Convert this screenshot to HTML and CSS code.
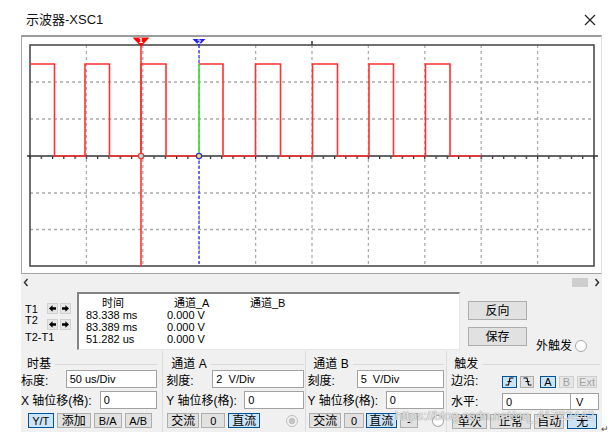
FILE: index.html
```html
<!DOCTYPE html>
<html lang="zh">
<head>
<meta charset="utf-8">
<title>示波器-XSC1</title>
<link rel="stylesheet" href="styles.css">
</head>
<body>
<div class="window">
  <div class="titlebar">
    <span class="title">示波器-XSC1</span>
    <svg class="close" width="12" height="12" viewBox="0 0 12 12"><path d="M1 1L11 11M11 1L1 11" stroke="#222" stroke-width="1.2" fill="none"/></svg>
  </div>
  <div class="panel">
    <div class="scope">
      <svg class="plot" width="579" height="236" viewBox="22 37 579 236">
        <defs>
          <pattern id="tk" x="29.4" y="0" width="11.28" height="10" patternUnits="userSpaceOnUse">
            <rect x="0" y="0" width="1.2" height="10" fill="#222"/>
          </pattern>
        </defs>
        <g class="grid">
          <path d="M86.4 45V266M142.8 45V266M199.2 45V266M255.6 45V266M312 45V266M368.4 45V266M424.8 45V266M481.2 45V266M537.6 45V266"/>
          <path d="M30 82H594M30 119H594M30 193H594M30 229.5H594"/>
        </g>
        <rect class="frame" x="30" y="45" width="564" height="221"/>
        <path class="axis" d="M27 156H598M312 41V45"/>
        <path class="wave" d="M30 64H54.5V156H85V64H109.5V156H141V64H166V156H199M199 64H223V156H255.5V64H280.5V156H312.5V64H337.5V156H369V64H393.5V156H425.5V64H450V156H481"/>
        <path class="cur2" d="M199 45V64M199 156V266"/>
        <path class="edge" d="M199 64V156"/>
        <path class="cur1" d="M141 45V266"/>
        <rect x="29.4" y="156.5" width="565" height="2.5" fill="url(#tk)"/>
        <circle cx="141" cy="156" r="2.6" fill="#9ee" stroke="#ff3030" stroke-width="1.2"/>
        <circle cx="199" cy="156" r="2.6" fill="#ee3" stroke="#2a2aff" stroke-width="1.2"/>
        <polygon points="132.5,37.5 149.5,37.5 141,46.5" fill="#f00"/>
        <text x="141" y="43.3" class="mk">1</text>
        <polygon points="192.5,39 205.5,39 199,45.5" fill="#2020ff"/>
        <text x="199" y="43.6" class="mk mk2">2</text>
      </svg>
    </div>

    <div class="hscroll">
      <svg class="chev" width="6" height="9" viewBox="0 0 6 9"><path d="M4.5 1L1.5 4.5L4.5 8" stroke="#333" stroke-width="1.5" fill="none"/></svg>
      <span class="thumb"></span>
      <svg class="chev" width="6" height="9" viewBox="0 0 6 9"><path d="M1.5 1L4.5 4.5L1.5 8" stroke="#333" stroke-width="1.5" fill="none"/></svg>
    </div>

    <div class="measure">
      <div class="tbox">
        <div class="trow trow1">
          <span class="tl">T1</span>
          <svg class="arr" width="11" height="11" viewBox="0 0 11 11"><path d="M1.2 5.5L5.6 1.4V4H9.8V7H5.6V9.6Z" fill="#000"/></svg>
          <svg class="arr" width="11" height="11" viewBox="0 0 11 11"><path d="M9.8 5.5L5.4 1.4V4H1.2V7H5.4V9.6Z" fill="#000"/></svg>
        </div>
        <div class="trow trow2">
          <span class="tl">T2</span>
          <svg class="arr" width="11" height="11" viewBox="0 0 11 11"><path d="M1.2 5.5L5.6 1.4V4H9.8V7H5.6V9.6Z" fill="#000"/></svg>
          <svg class="arr" width="11" height="11" viewBox="0 0 11 11"><path d="M9.8 5.5L5.4 1.4V4H1.2V7H5.4V9.6Z" fill="#000"/></svg>
        </div>
        <div class="trow3">T2-T1</div>
      </div>

      <div class="readout">
        <span class="h1">时间</span><span class="h2">通道_A</span><span class="h3">通道_B</span>
        <span>83.338 ms</span><span>0.000 V</span><span></span>
        <span>83.389 ms</span><span>0.000 V</span><span></span>
        <span>51.282 us</span><span>0.000 V</span><span></span>
      </div>

      <div class="side">
        <span class="btn bigbtn">反向</span>
        <span class="btn bigbtn">保存</span>
      </div>

      <div class="ext"><span>外触发</span><span class="radio"></span></div>
    </div>

    <div class="controls">
      <div class="group g1">
        <div class="gtitle"><span>时基</span></div>
        <div class="row"><span class="lbl">标度:</span><span class="field w91">50 us/Div</span></div>
        <div class="row r2"><span class="lbl">X 轴位移(格):</span><span class="field w57">0</span></div>
        <div class="row r3">
          <span class="btn sm on w26 lat">Y/T</span><span class="btn sm w34">添加</span><span class="btn sm w28 lat">B/A</span><span class="btn sm w27 lat">A/B</span>
        </div>
      </div>

      <div class="group g2">
        <div class="gtitle"><span>通道 A</span></div>
        <div class="row"><span class="lbl">刻度:</span><span class="field w92">2&nbsp; V/Div</span></div>
        <div class="row r2"><span class="lbl">Y 轴位移(格):</span><span class="field w60">0</span></div>
        <div class="row r3">
          <span class="btn sm w32">交流</span><span class="btn sm w24 lat g2gap">0</span><span class="btn sm on w32">直流</span>
          <span class="radio dis rA"></span>
        </div>
      </div>

      <div class="group g3">
        <div class="gtitle"><span>通道 B</span></div>
        <div class="row"><span class="lbl">刻度:</span><span class="field w87">5&nbsp; V/Div</span></div>
        <div class="row r2"><span class="lbl">Y 轴位移(格):</span><span class="field w58">0</span></div>
        <div class="row r3">
          <span class="btn sm w32">交流</span><span class="btn sm w20 lat">0</span><span class="btn sm on w31 g3gap">直流</span><span class="btn sm w18 lat">-</span>
          <span class="radio rB"></span>
        </div>
      </div>

      <div class="group g4">
        <div class="gtitle"><span>触发</span></div>
        <div class="row t1">
          <span class="lbl tlb">边沿:</span>
          <span class="btn eb on w15"><svg width="9" height="9" viewBox="0 0 9 9"><path d="M0.5 8H3.5L5 1H8.5M2.5 4.5H6.5" stroke="#000" stroke-width="1.1" fill="none"/></svg></span>
          <span class="btn eb w14"><svg width="9" height="9" viewBox="0 0 9 9"><path d="M0.5 1H4L5.5 8H8.5M2.5 4.5H6.5" stroke="#000" stroke-width="1.1" fill="none"/></svg></span>
          <span class="btn eb on w16 ab">A</span>
          <span class="btn eb dim w15">B</span>
          <span class="btn eb dim w20">Ext</span>
        </div>
        <div class="row r2 t2">
          <span class="lbl tlb">水平:</span>
          <span class="field w69">0</span><span class="field unit">V</span>
        </div>
        <div class="row r3 t3">
          <span class="btn sm w35">单次</span><span class="btn sm w41">正常</span><span class="btn sm w30">自动</span><span class="btn sm on w30">无</span>
        </div>
      </div>
    </div>
  </div>
  <div class="watermark">https://blog.csdn.net/qq_41722442</div>
  <div class="ret">↵</div>
</div>
</body>
</html>
```

FILE: styles.css
```css
* { box-sizing: border-box; margin: 0; padding: 0; }
body {
  background: #fff;
  font-family: "Liberation Sans", "Noto Sans CJK SC", sans-serif;
  font-size: 12px;
  color: #000;
}
.window { position: relative; width: 615px; height: 436px; overflow: hidden; background: #fff; }

.titlebar { display: flex; align-items: flex-start; height: 35px; padding: 13px 19px 0 26px; }
.title { font-size: 13px; line-height: 14px; color: #111; }
.close { margin-left: auto; margin-top: 1px; display: block; }

.panel { margin-left: 21px; width: 581px; background: #f0f0f0; }

.scope {
  height: 239px;
  background: #fff;
  border-top: 2px solid #9c9c9c;
  border-left: 1px solid #a9a9a9;
  border-right: 1px solid #e0e0e0;
  border-bottom: 1px solid #a3a3a3;
}
.plot { display: block; }
.grid path { stroke: #ababab; stroke-width: 1.3; stroke-dasharray: 3 3; fill: none; }
.frame { fill: none; stroke: #4d4d4d; stroke-width: 1.6; }
.axis { stroke: #333; stroke-width: 1.5; fill: none; }
.wave { stroke: #ff3030; stroke-width: 1.6; fill: none; }
.edge { stroke: #2edb2e; stroke-width: 1.6; }
.cur1 { stroke: #ff3030; stroke-width: 1.6; }
.cur2 { stroke: #2a2aff; stroke-width: 1.2; stroke-dasharray: 3 2; }
.mk { fill: #fff; font-family: "DejaVu Sans", sans-serif; font-size: 7px; font-weight: bold; text-anchor: middle; }
.mk2 { font-size: 6px; }

.hscroll { display: flex; align-items: center; height: 17px; padding: 0 2px; }
.chev { display: block; }
.thumb { margin-left: auto; margin-right: 6px; width: 16px; height: 9px; background: #cdcdcd; }

.measure { display: flex; align-items: flex-start; height: 60px; }
.tbox { width: 56px; padding-left: 4px; font-size: 11px; }
.trow { display: flex; align-items: center; height: 11px; }
.trow1 { margin-top: 12px; }
.trow2 { margin-top: 5px; }
.tl { width: 21.5px; line-height: 10px; }
.trow2 .tl { align-self: flex-start; margin-top: -4px; }
.trow3 { margin-top: 1px; line-height: 12px; }
.arr { display: block; width: 11px; height: 11px; background: #e6e6e6; border: 1px solid #d0d0d0; margin-right: 2px; }

.readout {
  display: grid;
  grid-template-columns: 81px 80px 1fr;
  align-content: start;
  width: 383px;
  height: 58px;
  margin-top: 1px;
  padding: 3px 0 0 7px;
  background: #fff;
  border-top: 2px solid #838383;
  border-left: 2px solid #838383;
  border-right: 1px solid #e6e6e6;
  border-bottom: 1px solid #e6e6e6;
  font-size: 11px;
  line-height: 12px;
}
.h1 { padding-left: 16px; }
.h2 { padding-left: 7px; }
.h3 { padding-left: 3px; }

.btn {
  display: flex;
  align-items: center;
  justify-content: center;
  background: #e1e1e1;
  border: 1px solid #adadad;
  font-size: 12px;
  line-height: 12px;
  white-space: nowrap;
}
.btn.on { background: #cce4f7; border-color: #005499; }
.btn.dim { color: #a3a3a3; background: #e6e6e6; border-color: #cfcfcf; }
.btn.lat { font-size: 11px; }

.side { display: flex; flex-direction: column; margin-left: 8px; margin-top: 10px; }
.bigbtn { width: 59px; height: 19px; }
.bigbtn + .bigbtn { margin-top: 7px; }

.ext { display: flex; align-items: center; margin-left: 9px; margin-top: 48px; }
.ext span:first-child { line-height: 14px; }
.radio { display: block; width: 12px; height: 12px; border-radius: 50%; border: 1px solid #a8a8a8; background: #fff; margin-left: 3px; }
.radio.dis { border-color: #bdbdbd; background: radial-gradient(circle, #c4c4c4 0 3px, #f3f3f3 3.6px); }

.controls { display: flex; height: 81px; }
.group { display: flex; flex-direction: column; border-right: 1px solid #dcdcdc; }
.g1 { width: 142px; padding-right: 5px; }
.g2 { width: 144px; padding: 0 1px 0 3.7px; }
.g3 { width: 141px; padding: 0 2.7px 0 1.3px; }
.g4 { flex: 1; padding: 0 2px 0 3.7px; border-right: none; }
.g1 .r3 { padding-left: 6.7px; }
.g2 .r3 { padding-left: 1px; }
.g3 .r3 { padding-left: 1.7px; }
.g4 .r3 { padding-left: 1.3px; }

.gtitle { display: flex; align-items: center; height: 12px; margin-top: 7px; line-height: 12px; }
.gtitle::after { content: ""; flex: 1; height: 1px; background: #dadada; margin-left: 4px; }
.g1 .gtitle span { padding-left: 6px; }
.g2 .gtitle span { padding-left: 5px; }
.g3 .gtitle span { padding-left: 5.7px; }
.g4 .gtitle span { padding-left: 3.3px; }

.row { display: flex; align-items: center; height: 18px; }
.row.r2 { margin-top: 3px; }
.row.r3 { margin-top: 4px; height: 15px; gap: 3px; }
.lbl { padding-top: 3px; line-height: 14px; white-space: nowrap; }
.r2 .lbl { padding-top: 1px; }
.field {
  display: flex;
  align-items: center;
  height: 18px;
  margin-left: auto;
  padding-left: 3px;
  background: #fff;
  border: 1px solid #a2a2a2;
  font-size: 11px;
  white-space: pre;
}
.r2 .field { height: 17.5px; }
.sm { height: 15px; }
.w15 { width: 15px; } .w14 { width: 14px; } .w16 { width: 16px; } .w18 { width: 18px; }
.w20 { width: 20px; } .w24 { width: 24px; } .w26 { width: 26px; } .w27 { width: 27px; }
.w28 { width: 28px; } .w30 { width: 30px; } .w31 { width: 31px; } .w32 { width: 32px; }
.w34 { width: 34px; } .w35 { width: 35px; } .w41 { width: 41px; }
.w57 { width: 57px; } .w58 { width: 58px; } .w60 { width: 60px; } .w69 { width: 69px; }
.w87 { width: 87px; } .w91 { width: 91px; } .w92 { width: 92px; }
.g2gap { margin-left: -1px; }
.g3gap { margin-left: -1px; }
.rA { margin-left: 23px; }
.rB { margin-left: 11px; }

.t1 { align-items: flex-end; }
.t1 .lbl { align-self: center; }
.tlb { width: 51px; }
.eb { height: 12.5px; font-size: 11px; margin-right: 3px; }
.eb.ab { margin-left: 3px; }
.t2 { margin-top: 5px !important; height: 17px; }
.t2 .lbl { padding-top: 0; }
.t2 .field { margin-left: 0; height: 17px; }
.t2 .unit { width: 28px; padding-left: 5px; border-left: none; margin-left: 0; }
.t3 { margin-top: 4px !important; }

.watermark {
  position: absolute;
  left: 395px;
  top: 408px;
  font-size: 13px;
  line-height: 16px;
  color: rgba(255, 255, 255, 0.82);
  text-shadow: 0 0 1px rgba(90, 90, 90, 0.55), 0 0 1px rgba(90, 90, 90, 0.55);
  white-space: nowrap;
  pointer-events: none;
}
.ret { position: absolute; left: 601px; top: 424px; font-size: 9px; color: #444; }
```
